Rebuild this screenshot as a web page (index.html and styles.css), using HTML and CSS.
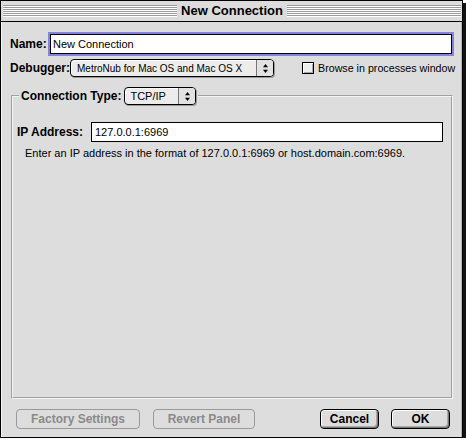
FILE: index.html
```html
<!DOCTYPE html>
<html>
<head>
<meta charset="utf-8">
<title>New Connection</title>
<link rel="stylesheet" href="styles.css">
</head>
<body>
<div class="window">
  <div class="titlebar">
    <span class="stripes"></span>
    <span class="title">New Connection</span>
    <span class="stripes"></span>
  </div>
  <div class="content">
    <div class="row name-row">
      <span class="lbl name-lbl">Name:</span>
      <div class="field focus">New Connection</div>
    </div>
    <div class="row dbg-row">
      <span class="lbl dbg-lbl">Debugger:</span>
      <div class="popup dbg-popup">
        <span class="popup-text">MetroNub for Mac OS and Mac OS X</span>
        <span class="popup-arrow"><svg width="5" height="9" viewBox="0 0 5 9"><polygon points="2.5,0 5,3.2 0,3.2" fill="#000"/><polygon points="0,5.8 5,5.8 2.5,9" fill="#000"/></svg></span>
      </div>
      <div class="check">
        <span class="box"></span>
        <span class="check-text">Browse in processes window</span>
      </div>
    </div>
    <fieldset class="group">
      <legend class="group-title">
        <span class="lbl">Connection Type:</span>
        <div class="popup tcp-popup">
          <span class="popup-text">TCP/IP</span>
          <span class="popup-arrow"><svg width="5" height="9" viewBox="0 0 5 9"><polygon points="2.5,0 5,3.2 0,3.2" fill="#000"/><polygon points="0,5.8 5,5.8 2.5,9" fill="#000"/></svg></span>
        </div>
      </legend>
      <div class="row ip-row">
        <span class="lbl ip-lbl">IP Address:</span>
        <div class="field ip-field">127.0.0.1:6969</div>
      </div>
      <p class="help">Enter an IP address in the format of 127.0.0.1:6969 or host.domain.com:6969.</p>
    </fieldset>
    <div class="buttons">
      <div class="btn disabled factory">Factory Settings</div>
      <div class="btn disabled revert">Revert Panel</div>
      <div class="btn cancel">Cancel</div>
      <div class="btn ok">OK</div>
    </div>
  </div>
</div>
</body>
</html>
```
FILE: styles.css
```css
* { box-sizing: border-box; }
html, body { margin: 0; padding: 0; background: #fff; }
body {
  font-family: "Liberation Sans", Arial, sans-serif;
  font-size: 11px;
  color: #000;
}
.window {
  width: 463px;
  height: 438px;
  border: 1px solid #000;
  box-shadow: 3px 3px 0 #111;
  background: #dddddd;
  display: flex;
  flex-direction: column;
}
.titlebar {
  height: 21px;
  border-bottom: 1px solid #000;
  display: flex;
  align-items: center;
  padding: 0 1px 0 2px;
  background: #dcdcdc;
}
.stripes {
  flex: 1;
  height: 12px;
  background: repeating-linear-gradient(to bottom, #9a9a9a 0 1px, #ffffff 1px 2px);
}
.title {
  font-weight: bold;
  font-size: 13px;
  padding: 0 4px;
  line-height: 16px;
}
.content {
  flex: 1;
  display: flex;
  flex-direction: column;
  padding: 12px 12px 8px 9px;
  box-shadow: inset 1px 0 0 #f4f4f4, inset -1px 0 0 #b0b0b0;
}
.row { display: flex; align-items: center; }
.row > * { flex-shrink: 0; }
.lbl { font-weight: bold; font-size: 12px; white-space: nowrap; }
.name-lbl { width: 40px; }
.field {
  height: 20px;
  border: 1px solid #000;
  background: #fff;
  padding: 0 2px;
  display: flex;
  align-items: center;
  font-size: 11px;
  white-space: nowrap;
}
.focus {
  width: 402px;
  box-shadow: 0 0 0 2px #8484dc;
}
.dbg-row { margin-top: 5px; }
.dbg-lbl { width: 60px; }
.popup {
  height: 18px;
  border: 1px solid #000;
  border-radius: 4px;
  background: #ececec;
  display: flex;
  align-items: stretch;
  flex-shrink: 0;
  box-shadow: inset 1px 1px 0 #fff, 1px 1px 0 #999;
}
.popup-text {
  flex: 1;
  padding-left: 6px;
  display: flex;
  align-items: center;
  white-space: nowrap;
  font-size: 10px;
}
.popup-arrow {
  width: 17px;
  border-left: 1px solid #777;
  display: flex;
  align-items: center;
  justify-content: center;
  background: #e2e2e2;
  border-radius: 0 3px 3px 0;
}
.dbg-popup { width: 204px; }
.check {
  display: flex;
  align-items: center;
  margin-left: 28px;
}
.box {
  width: 12px;
  height: 12px;
  flex-shrink: 0;
  border: 1px solid #000;
  background: #eeeeee;
  box-shadow: inset 1px 1px 0 #fff, inset -1px -1px 0 #aaa;
  margin-right: 4px;
}
.check-text { font-size: 10.7px; white-space: nowrap; }
.group {
  flex: 1;
  margin: 10px 0 0 1px;
  width: 442px;
  padding: 0 0 0 6px;
  border: 2px groove #f4f4f4;
  min-inline-size: 0;
}
.group-title {
  display: flex;
  align-items: center;
  padding: 0 2px;
}
.tcp-popup { width: 72px; margin-left: 3px; }
.tcp-popup .popup-text { padding-left: 5px; font-size: 11px; }
.ip-row { margin-top: 17px; margin-left: -2px; }
.ip-lbl { width: 74px; }
.ip-field { width: 352px; padding-left: 3px; }
.help {
  margin: 5px 0 0 6px;
  font-size: 11px;
  white-space: nowrap;
}
.buttons {
  display: flex;
  margin-top: 10px;
  height: 20px;
}
.btn {
  height: 20px;
  border: 1px solid #000;
  border-radius: 4px;
  background: #dddddd;
  font-weight: bold;
  font-size: 12px;
  display: flex;
  align-items: center;
  justify-content: center;
  white-space: nowrap;
  flex-shrink: 0;
  box-shadow: inset 1px 1px 0 #fff, inset -1px -1px 0 #777, inset -2px -2px 0 #aaa;
}
.btn.disabled {
  border-color: #9a9a9a;
  color: #8a8a8a;
  box-shadow: none;
}
.factory { width: 124px; margin-left: 6px; }
.revert { width: 102px; margin-left: 13px; }
.cancel { width: 59px; margin-left: auto; }
.ok { width: 59px; margin-left: 12px; }
```
